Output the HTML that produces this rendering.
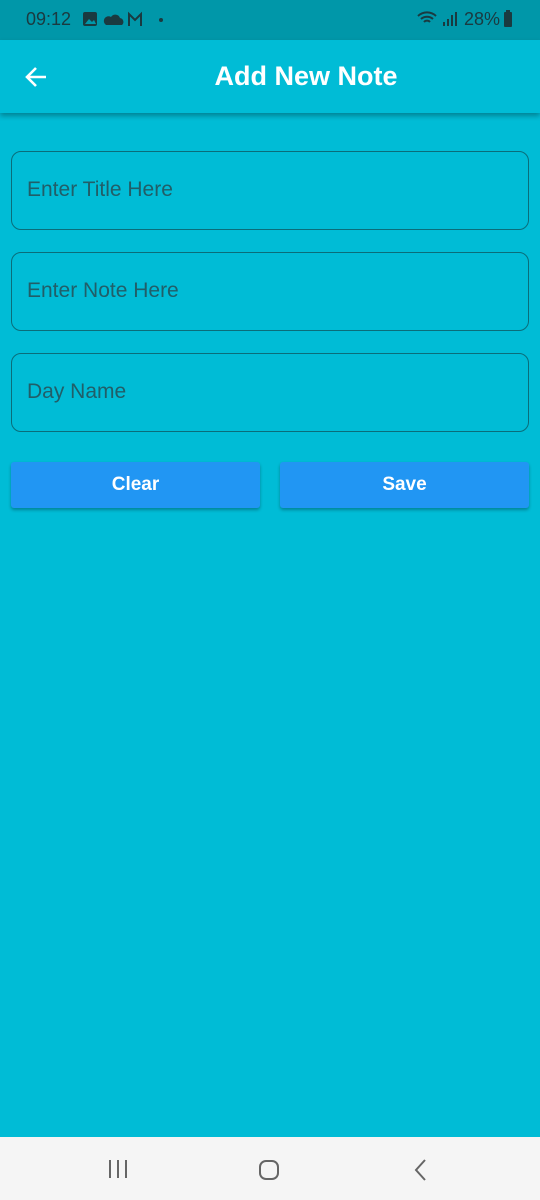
<!DOCTYPE html>
<html><head><meta charset="utf-8"><style>
*{margin:0;padding:0;box-sizing:border-box}
body{width:540px;height:1200px;background:#00bcd6;font-family:"Liberation Sans",sans-serif;position:relative;overflow:hidden}
.sb{position:absolute;top:0;left:0;width:540px;height:40px;background:#0097a9;color:#1a3a40;font-size:18px}
.ab{position:absolute;top:40px;left:0;width:540px;height:73px;background:#00bcd6;box-shadow:0 3px 5px rgba(0,0,0,.3)}
.ab h1{position:absolute;left:72px;right:0;top:21px;text-align:center;color:#fff;font-size:27px;font-weight:bold}
.f{position:absolute;left:11px;width:518px;height:79px;border:1px solid #0a6d7a;border-radius:10px;color:#215e68;font-size:21px;padding:26px 15px}
.b{position:absolute;top:462px;height:46px;width:249px;background:#2196f3;border-radius:3px;color:#fff;font-weight:bold;font-size:19px;text-align:center;line-height:46px;box-shadow:0 2px 3px rgba(0,0,0,.3)}
.nav{position:absolute;top:1137px;left:0;width:540px;height:63px;background:#f5f5f5}
</style></head><body>
<div class="sb">
<span style="position:absolute;left:26px;top:9px">09:12</span>
<svg style="position:absolute;left:82px;top:11px" width="90" height="18"><rect x="1" y="1" width="14" height="14" rx="2" fill="#1a3a40"/><path d="M3 13l4-5 3 3 2-2 2 4z" fill="#0097a9"/><path d="M24 14h16a4 4 0 0 0-2-7 5 5 0 0 0-9-1 4 4 0 0 0-5 8z" fill="#1a3a40"/><path d="M47 15V3l6 6 6-6v12" stroke="#1a3a40" stroke-width="2" fill="none"/><circle cx="79" cy="9" r="2" fill="#1a3a40"/></svg>
<svg style="position:absolute;left:416px;top:10px" width="44" height="18"><path d="M2 6a13 13 0 0 1 18 0M5 9a9 9 0 0 1 12 0M8 12a4 4 0 0 1 6 0" stroke="#1a3a40" stroke-width="2" fill="none"/><rect x="27" y="12" width="2" height="4" fill="#1a3a40"/><rect x="31" y="9" width="2" height="7" fill="#1a3a40"/><rect x="35" y="5" width="2" height="11" fill="#1a3a40"/><rect x="39" y="2" width="2" height="14" fill="#1a3a40"/></svg>
<span style="position:absolute;left:464px;top:9px">28%</span>
<svg style="position:absolute;left:503px;top:10px" width="10" height="18"><rect x="3" y="0" width="4" height="2" fill="#1a3a40"/><rect x="1" y="2" width="8" height="15" rx="1" fill="#1a3a40"/></svg>
</div>
<div class="ab"><svg style="position:absolute;left:24px;top:25px" width="24" height="24"><path d="M22 12H3M12 3l-9 9 9 9" stroke="#fff" stroke-width="2.6" fill="none"/></svg><h1>Add New Note</h1></div>
<div class="f" style="top:151px">Enter Title Here</div>
<div class="f" style="top:252px">Enter Note Here</div>
<div class="f" style="top:353px">Day Name</div>
<div class="b" style="left:11px">Clear</div>
<div class="b" style="left:280px">Save</div>
<div class="nav">
<svg style="position:absolute;left:108px;top:22px" width="20" height="20"><path d="M2 1v18M10 1v18M18 1v18" stroke="#666" stroke-width="2"/></svg>
<svg style="position:absolute;left:258px;top:22px" width="22" height="22"><rect x="2" y="2" width="18" height="18" rx="6" stroke="#666" stroke-width="2" fill="none"/></svg>
<svg style="position:absolute;left:412px;top:21px" width="16" height="24"><path d="M13 2L4 12l9 10" stroke="#666" stroke-width="2" fill="none"/></svg>
</div>
</body></html>
